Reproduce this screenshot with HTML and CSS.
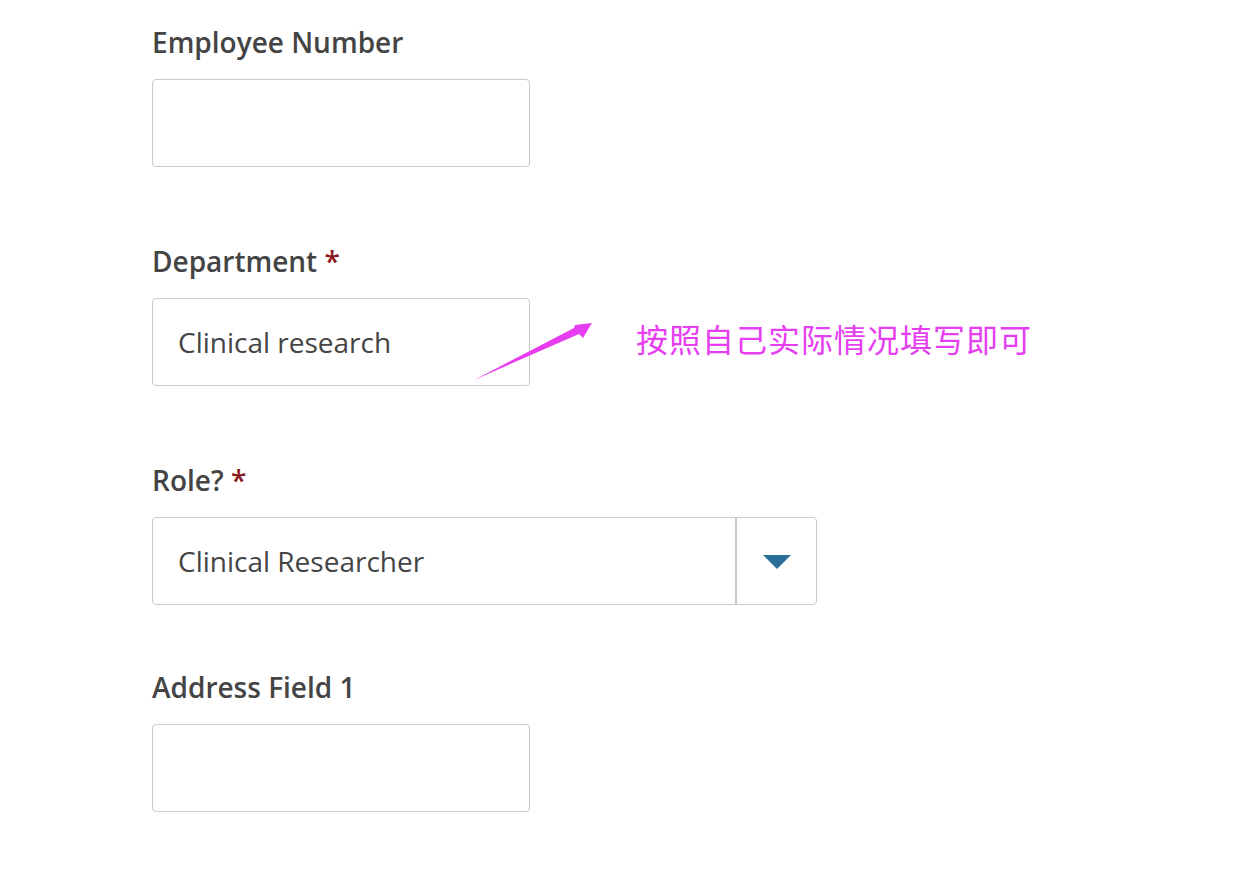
FILE: index.html
```html
<!DOCTYPE html>
<html lang="en">
<head>
  <meta charset="UTF-8">
  <meta name="viewport" content="width=device-width, initial-scale=1.0">
  <title>Employee Details</title>
  <link rel="stylesheet" href="styles.css">
</head>
<body>
  <form class="profile-form">
    <div class="field">
      <label class="field-label" for="employee-number">Employee Number</label>
      <input class="text-input" type="text" id="employee-number">
    </div>

    <div class="field">
      <label class="field-label" for="department">Department <span class="required">*</span></label>
      <div class="field-row">
        <input class="text-input" type="text" id="department" value="Clinical research">
        <p class="note">按照自己实际情况填写即可</p>
      </div>
    </div>

    <div class="field field-select">
      <label class="field-label" for="role">Role? <span class="required">*</span></label>
      <div class="select-box" id="role">
        <span class="select-value">Clinical Researcher</span>
        <span class="select-toggle">
          <svg width="28" height="14" viewBox="0 0 28 14"><path d="M0 0 H28 L14 14 Z" fill="#2c6e9a"/></svg>
        </span>
      </div>
    </div>

    <div class="field">
      <label class="field-label" for="address-1">Address Field 1</label>
      <input class="text-input" type="text" id="address-1">
    </div>
  </form>

  <svg class="annotation-arrow" width="1248" height="877" viewBox="0 0 1248 877">
    <polygon points="474,380 574,328 575,325 592,323 583,338 579,334" fill="#e83cf0"/>
  </svg>
</body>
</html>
```

FILE: styles.css
```css
body {
  margin: 0;
  background: #fff;
  font-family: "Open Sans", "Noto Sans", sans-serif;
  color: #444;
}

.profile-form {
  padding: 23px 0 0 152px;
}

.field {
  display: flex;
  flex-direction: column;
  align-items: flex-start;
  margin-bottom: 75px;
}

.field-select {
  margin-bottom: 63px;
}

.field-label {
  font-size: 28px;
  font-weight: 600;
  line-height: 38px;
  margin-bottom: 18px;
}

.required {
  color: #8b1a1a;
}

.field-row {
  display: flex;
  align-items: center;
  gap: 106px;
}

.text-input {
  box-sizing: border-box;
  width: 378px;
  height: 88px;
  margin: 0;
  padding: 0 25px;
  border: 1px solid #c9c9c9;
  border-radius: 4px;
  font-family: inherit;
  font-size: 28px;
  color: #444;
  background: #fff;
  outline: none;
}

.note {
  margin: 0 0 8px;
  font-family: "Noto Sans CJK SC", sans-serif;
  font-size: 32px;
  color: #e63ef0;
  letter-spacing: 1px;
}

.select-box {
  box-sizing: border-box;
  display: flex;
  width: 665px;
  height: 88px;
  border: 1px solid #c9c9c9;
  border-radius: 4px;
}

.select-value {
  flex: 1;
  display: flex;
  align-items: center;
  padding-left: 25px;
  font-size: 28px;
}

.select-toggle {
  width: 79px;
  display: flex;
  align-items: center;
  justify-content: center;
  border-left: 2px solid #c9c9c9;
}

.select-toggle svg {
  margin-top: 2px;
}

.annotation-arrow {
  position: absolute;
  top: 0;
  left: 0;
  pointer-events: none;
}
```
